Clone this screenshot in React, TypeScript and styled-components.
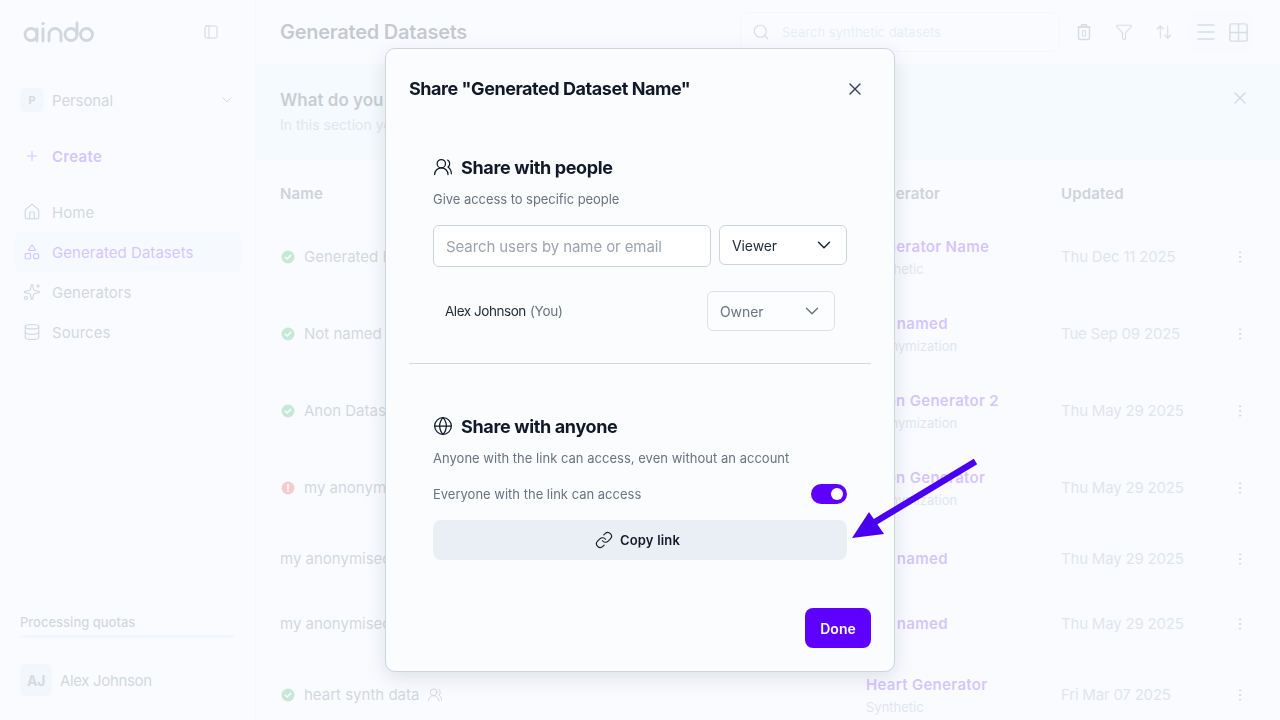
import React from "react";
import styled, { createGlobalStyle } from "styled-components";
import {
  ArrowUpDown, ChevronDown, Database, EllipsisVertical, Funnel, Globe, Grid2x2, House, Link, Menu,
  PanelLeft, Plus, Search, Shapes, Sparkles, UsersRound, X,
} from "lucide-react";

const Global = createGlobalStyle`
  html, body { margin: 0; height: 100%; background: #f9fbff; overflow: hidden; }
  body { font-family: Inter, "Noto Sans", sans-serif; color: #0f172a; }
  #root { height: 100%; }
  * { box-sizing: border-box; }
`;

const Page = styled.div`
  display: grid;
  grid-template-columns: 256px 1fr;
  width: 1280px;
  height: 720px;
  overflow: hidden;
`;

const Sidebar = styled.aside`
  display: flex;
  flex-direction: column;
  padding: 0 14px 24px;
  border-right: 1px solid #e6eaf0;
`;
const LogoRow = styled.div`
  display: flex;
  align-items: center;
  justify-content: space-between;
  height: 64px;
  padding: 0 22px 0 8px;
  color: #4b5563;
`;
const Workspace = styled.div`
  display: flex;
  align-items: center;
  margin-top: 24px;
  height: 24px;
  padding: 0 6px;
  gap: 8px;
  font-size: 15px;
  letter-spacing: -0.1px;
  color: #4b5563;
  svg { margin-left: auto; }
`;
const Square = styled.span<{ $size: number }>`
  display: inline-flex;
  align-items: center;
  justify-content: center;
  width: ${(p) => p.$size}px;
  height: ${(p) => p.$size}px;
  border-radius: 6px;
  background: #dfe5ea;
  color: #56606e;
  font-size: ${(p) => (p.$size > 24 ? 14 : 11)}px;
  font-weight: 700;
  flex: none;
`;
const CreateRow = styled.div`
  display: flex;
  align-items: center;
  gap: 12px;
  height: 24px;
  margin-top: 32px;
  padding: 0 10px;
  color: #5e00ff;
  font-size: 15px;
  font-weight: 600;
  letter-spacing: 0.3px;
`;
const Nav = styled.nav`
  display: flex;
  flex-direction: column;
  margin-top: 24px;
`;
const NavItem = styled.div<{ $active?: boolean }>`
  display: flex;
  align-items: center;
  gap: 11px;
  height: 40px;
  width: 228px;
  padding: 0 9px;
  border-radius: 8px;
  font-size: 15px;
  letter-spacing: 0.05px;
  color: ${(p) => (p.$active ? "#5e00ff" : "#4b5563")};
  background: ${(p) => (p.$active ? "#eaeffb" : "transparent")};
`;
const Quota = styled.div`
  margin-top: auto;
  padding: 0 6px;
  font-size: 13px;
  font-weight: 500;
  color: #4b5563;
`;
const QuotaBar = styled.div`
  height: 3px;
  width: 214px;
  margin-top: 5px;
  border-radius: 2px;
  background: #dfe4ea;
`;
const UserRow = styled.div`
  display: flex;
  align-items: center;
  gap: 8px;
  margin: 26px 0 13px;
  padding: 0 6px;
  font-size: 15px;
  letter-spacing: -0.35px;
  color: #4b5563;
`;

const Main = styled.main`
  display: flex;
  flex-direction: column;
  min-width: 0;
`;
const TopBar = styled.header`
  display: flex;
  align-items: center;
  height: 64px;
  padding: 0 26px 0 24px;
`;
const PageTitle = styled.h1`
  margin: 0;
  font-size: 20px;
  font-weight: 600;
  letter-spacing: -0.25px;
  color: #111827;
`;
const SearchBox = styled.div`
  display: flex;
  align-items: center;
  gap: 12px;
  width: 320px;
  height: 40px;
  margin-left: auto;
  padding: 0 11px;
  border: 1px solid #e1e5eb;
  border-radius: 8px;
  font-size: 13px;
  color: #b4bac4;
  svg { color: #6b7280; }
`;
const ToolIcon = styled.span<{ $first?: boolean }>`
  display: inline-flex;
  justify-content: center;
  width: 40px;
  margin-left: ${(p) => (p.$first ? 4 : 0)}px;
  color: #6b7280;
`;
const ToolGroup = styled.div`
  display: flex;
  align-items: center;
  height: 40px;
  margin-left: 6px;
  border-radius: 8px;
  background: #f3f5f9;
  color: #6b7280;
  span { display: inline-flex; justify-content: center; width: 32px; }
`;
const Banner = styled.section`
  position: relative;
  height: 96px;
  padding: 24px 24px 0;
  background: #e4f5f5;
`;
const BannerTitle = styled.div`
  font-size: 17px;
  font-weight: 600;
  line-height: 24px;
  color: #1f2937;
`;
const BannerText = styled.div`
  margin-top: 4px;
  font-size: 14px;
  line-height: 18px;
  color: #8b93a0;
`;
const BannerClose = styled.span`
  position: absolute;
  right: 30px;
  top: 24px;
  color: #4b5563;
`;
const Columns = "586px 195px 1fr 40px";
const HeadRow = styled.div`
  display: grid;
  grid-template-columns: ${Columns};
  align-items: center;
  height: 50px;
  margin-top: 8px;
  padding: 0 20px 0 24px;
  font-size: 15px;
  font-weight: 600;
  letter-spacing: 0.15px;
  color: #374151;
`;
const Row = styled.div<{ $h: number }>`
  display: grid;
  grid-template-columns: ${Columns};
  align-items: center;
  height: ${(p) => p.$h}px;
  flex: none;
  padding: 0 20px 0 24px;
  font-size: 15px;
  color: #4b5563;
`;
const NameCell = styled.div`
  display: flex;
  align-items: center;
  gap: 8px;
  white-space: nowrap;
`;
const GenCell = styled.div<{ $double: boolean }>`
  padding-top: ${(p) => (p.$double ? 2 : 0)}px;
`;
const GenName = styled.div`
  font-weight: 600;
  letter-spacing: 0.3px;
  color: #5e00ff;
  line-height: 22px;
`;
const GenType = styled.div`
  font-size: 13px;
  line-height: 22px;
  color: #8b93a0;
`;
const DateCell = styled.div`
  letter-spacing: -0.2px;
  color: #8b93a0;
`;
const Kebab = styled.div`
  display: flex;
  justify-content: center;
  color: #4b5563;
`;

const Overlay = styled.div`
  position: fixed;
  inset: 0;
  display: flex;
  align-items: center;
  justify-content: center;
  background: rgba(249, 251, 255, 0.78);
  backdrop-filter: blur(0.6px);
`;
const Dialog = styled.div`
  position: relative;
  display: flex;
  flex-direction: column;
  width: 510px;
  height: 624px;
  padding: 24px 23px 23px;
  background: #fafcfe;
  border: 1px solid #cfd4db;
  border-radius: 10px;
  box-shadow: 0 6px 20px rgba(30, 41, 59, 0.12);
`;
const DialogHead = styled.div`
  display: flex;
  align-items: center;
  justify-content: space-between;
  height: 32px;
  padding-right: 6px;
  color: #374151;
`;
const DialogTitle = styled.h2`
  margin: 0;
  font-size: 18px;
  line-height: 32px;
  font-weight: 700;
  letter-spacing: -0.45px;
  color: #111827;
`;
const Section = styled.section<{ $top: number }>`
  margin-top: ${(p) => p.$top}px;
  padding: 0 24px;
`;
const SectionTitle = styled.h3`
  display: flex;
  align-items: center;
  gap: 8px;
  margin: 0;
  height: 24px;
  font-size: 18px;
  font-weight: 700;
  letter-spacing: -0.35px;
  color: #111827;
`;
const Sub = styled.p<{ $wide?: boolean }>`
  margin: 12px 0 0;
  font-size: 13px;
  line-height: 16px;
  letter-spacing: ${(p) => (p.$wide ? "0.02px" : "-0.05px")};
  color: #6b7280;
`;
const InviteRow = styled.div`
  display: flex;
  align-items: flex-start;
  gap: 8px;
  margin-top: 18px;
`;
const TextInput = styled.div`
  display: flex;
  align-items: center;
  width: 278px;
  height: 42px;
  padding: 0 12px;
  background: #fff;
  border: 1px solid #cfd4db;
  border-radius: 6px;
  font-size: 15px;
  letter-spacing: -0.1px;
  color: #9ca3af;
`;
const Select = styled.div<{ $muted?: boolean }>`
  display: flex;
  align-items: center;
  justify-content: space-between;
  width: 128px;
  height: 40px;
  padding: 0 11px 0 12px;
  background: ${(p) => (p.$muted ? "#fcfdfe" : "#fff")};
  border: 1px solid ${(p) => (p.$muted ? "#dde1e7" : "#cfd4db")};
  border-radius: 6px;
  font-size: 14px;
  letter-spacing: -0.1px;
  color: ${(p) => (p.$muted ? "#6b7280" : "#1f2937")};
`;
const MemberRow = styled.div`
  display: flex;
  align-items: center;
  justify-content: space-between;
  margin-top: 24px;
  padding: 0 12px;
`;
const Member = styled.div`
  font-size: 13.5px;
  letter-spacing: -0.45px;
  color: #1f2937;
  span { margin-left: 4px; color: #6b7280; letter-spacing: -0.25px; }
`;
const Divider = styled.hr`
  margin: 32px 0 0;
  border: 0;
  border-top: 1px solid #d4d8dd;
`;
const ToggleRow = styled.div`
  display: flex;
  align-items: center;
  justify-content: space-between;
  margin-top: 18px;
  font-size: 13px;
  letter-spacing: 0;
  color: #6b7280;
`;
const Toggle = styled.span`
  display: flex;
  align-items: center;
  justify-content: flex-end;
  width: 36px;
  height: 20px;
  padding-right: 4px;
  border-radius: 10px;
  background: #5e00ff;
  &::after {
    content: "";
    width: 12px;
    height: 12px;
    border-radius: 50%;
    background: #fff;
  }
`;
const CopyButton = styled.div`
  display: flex;
  align-items: center;
  justify-content: center;
  gap: 7px;
  height: 40px;
  margin-top: 16px;
  padding-right: 5px;
  border-radius: 8px;
  background: #eaeff6;
  font-size: 13px;
  font-weight: 600;
  letter-spacing: 0.2px;
  color: #111827;
`;
const Footer = styled.div`
  display: flex;
  justify-content: flex-end;
  margin-top: auto;
`;
const DoneButton = styled.div`
  display: flex;
  align-items: center;
  justify-content: center;
  width: 66px;
  height: 40px;
  border-radius: 8px;
  background: #5e00ff;
  color: #fff;
  font-size: 14px;
  font-weight: 600;
`;
const Annotation = styled.svg`
  position: fixed;
  left: 0;
  top: 0;
  pointer-events: none;
`;

const Logo = () => (
  <svg width="72" height="24" viewBox="22 20 72 24" fill="none" stroke="currentColor" strokeWidth="2.8" strokeLinecap="round" role="img" aria-label="aindo logo">
    <circle cx="31" cy="34.5" r="6" />
    <path d="M37 29v12" />
    <path d="M43 29v12" />
    <circle cx="43" cy="23.5" r="1.2" fill="currentColor" strokeWidth="1" />
    <path d="M49 41v-6.5a6 6 0 0 1 12 0V41" />
    <circle cx="71" cy="34.5" r="6" />
    <path d="M77 34.5V23" />
    <circle cx="86.5" cy="34.5" r="6" />
  </svg>
);

const TrashIcon = () => (
  <svg width="20" height="20" viewBox="0 0 20 20" fill="none" stroke="currentColor" strokeWidth="1.5" strokeLinejoin="round">
    <rect x="4.5" y="5" width="11" height="12.5" rx="1.5" />
    <path d="M3.5 5h13M7.5 5V2.8h5V5" />
    <rect x="8.5" y="8.5" width="3" height="5.5" strokeWidth="1" />
  </svg>
);

const Status = ({ kind }: { kind: "ok" | "error" }) => (
  <svg width="16" height="16" viewBox="0 0 16 16" style={{ flex: "none" }}>
    <circle cx="8" cy="8" r="6.5" fill={kind === "ok" ? "#16a34a" : "#dc2626"} />
    {kind === "ok" ? (
      <path d="M5.2 8.2 7.2 10l3.6-3.8" fill="none" stroke="#fff" strokeWidth="1.5" strokeLinecap="round" strokeLinejoin="round" />
    ) : (
      <path d="M8 4.5v4.2M8 10.8v.4" fill="none" stroke="#fff" strokeWidth="1.6" strokeLinecap="round" />
    )}
  </svg>
);

type RowData = {
  name: string;
  status?: "ok" | "error";
  shared?: boolean;
  gen: string;
  type?: string;
  date: string;
  h: number;
};

const rows: RowData[] = [
  { name: "Generated Dataset Name", status: "ok", gen: "Generator Name", type: "Synthetic", date: "Thu Dec 11 2025", h: 77 },
  { name: "Not named", status: "ok", gen: "Not named", type: "Anonymization", date: "Tue Sep 09 2025", h: 77 },
  { name: "Anon Dataset", status: "ok", gen: "Anon Generator 2", type: "Anonymization", date: "Thu May 29 2025", h: 77 },
  { name: "my anonymised dataset", status: "error", gen: "Anon Generator", type: "Anonymization", date: "Thu May 29 2025", h: 77 },
  { name: "my anonymised dataset", gen: "Not named", date: "Thu May 29 2025", h: 65 },
  { name: "my anonymised dataset", gen: "Not named", date: "Thu May 29 2025", h: 65 },
  { name: "heart synth data", status: "ok", shared: true, gen: "Heart Generator", type: "Synthetic", date: "Fri Mar 07 2025", h: 77 },
];

const navItems = [
  { label: "Home", Icon: House },
  { label: "Generated Datasets", Icon: Shapes, active: true },
  { label: "Generators", Icon: Sparkles },
  { label: "Sources", Icon: Database },
];

export default function App() {
  return (
    <>
      <Global />
      <Page>
        <Sidebar>
          <LogoRow>
            <Logo />
            <PanelLeft size={16} strokeWidth={1.5} />
          </LogoRow>
          <Workspace>
            <Square $size={24}>P</Square>
            Personal
            <ChevronDown size={16} strokeWidth={1.5} />
          </Workspace>
          <CreateRow>
            <Plus size={16} strokeWidth={1.5} />
            Create
          </CreateRow>
          <Nav>
            {navItems.map(({ label, Icon, active }) => (
              <NavItem key={label} $active={active}>
                <Icon size={18} strokeWidth={1.5} />
                {label}
              </NavItem>
            ))}
          </Nav>
          <Quota>
            Processing quotas
            <QuotaBar />
          </Quota>
          <UserRow>
            <Square $size={32}>AJ</Square>
            Alex Johnson
          </UserRow>
        </Sidebar>
        <Main>
          <TopBar>
            <PageTitle>Generated Datasets</PageTitle>
            <SearchBox>
              <Search size={18} strokeWidth={1.5} />
              Search synthetic datasets
            </SearchBox>
            <ToolIcon $first>
              <TrashIcon />
            </ToolIcon>
            <ToolIcon>
              <Funnel size={18} strokeWidth={1.5} />
            </ToolIcon>
            <ToolIcon>
              <ArrowUpDown size={18} strokeWidth={1.5} />
            </ToolIcon>
            <ToolGroup>
              <span><Menu size={24} strokeWidth={1.6} /></span>
              <span><Grid2x2 size={23} strokeWidth={1.5} /></span>
            </ToolGroup>
          </TopBar>
          <Banner>
            <BannerTitle>What do you want to do?</BannerTitle>
            <BannerText>In this section you can find your generated datasets</BannerText>
            <BannerClose><X size={20} strokeWidth={1.5} /></BannerClose>
          </Banner>
          <HeadRow>
            <div>Name</div>
            <div>Generator</div>
            <div>Updated</div>
          </HeadRow>
          {rows.map((r, i) => (
            <Row key={i} $h={r.h}>
              <NameCell>
                {r.status && <Status kind={r.status} />}
                {r.name}
                {r.shared && <UsersRound size={16} strokeWidth={1.5} />}
              </NameCell>
              <GenCell $double={!!r.type}>
                <GenName>{r.gen}</GenName>
                {r.type && <GenType>{r.type}</GenType>}
              </GenCell>
              <DateCell>{r.date}</DateCell>
              <Kebab><EllipsisVertical size={16} strokeWidth={1.5} /></Kebab>
            </Row>
          ))}
        </Main>
      </Page>
      <Overlay>
        <Dialog>
          <DialogHead>
            <DialogTitle>Share "Generated Dataset Name"</DialogTitle>
            <X size={20} strokeWidth={1.6} />
          </DialogHead>
          <Section $top={50}>
            <SectionTitle>
              <UsersRound size={20} strokeWidth={1.5} />
              Share with people
            </SectionTitle>
            <Sub>Give access to specific people</Sub>
            <InviteRow>
              <TextInput>Search users by name or email</TextInput>
              <Select>
                Viewer
                <ChevronDown size={22} strokeWidth={1.7} />
              </Select>
            </InviteRow>
            <MemberRow>
              <Member>Alex Johnson<span>(You)</span></Member>
              <Select $muted>
                Owner
                <ChevronDown size={22} strokeWidth={1.5} />
              </Select>
            </MemberRow>
          </Section>
          <Divider />
          <Section $top={50}>
            <SectionTitle>
              <Globe size={20} strokeWidth={1.5} />
              Share with anyone
            </SectionTitle>
            <Sub $wide>Anyone with the link can access, even without an account</Sub>
            <ToggleRow>
              Everyone with the link can access
              <Toggle />
            </ToggleRow>
            <CopyButton>
              <Link size={18} strokeWidth={1.5} />
              Copy link
            </CopyButton>
          </Section>
          <Footer>
            <DoneButton>Done</DoneButton>
          </Footer>
        </Dialog>
      </Overlay>
      <Annotation width="1280" height="720" viewBox="0 0 1280 720">
        <path d="M975.5 461.5 875 522" stroke="#4a00f0" strokeWidth="6.5" fill="none" />
        <path d="M852 538 869 512 884 534Z" fill="#4a00f0" />
      </Annotation>
    </>
  );
}
